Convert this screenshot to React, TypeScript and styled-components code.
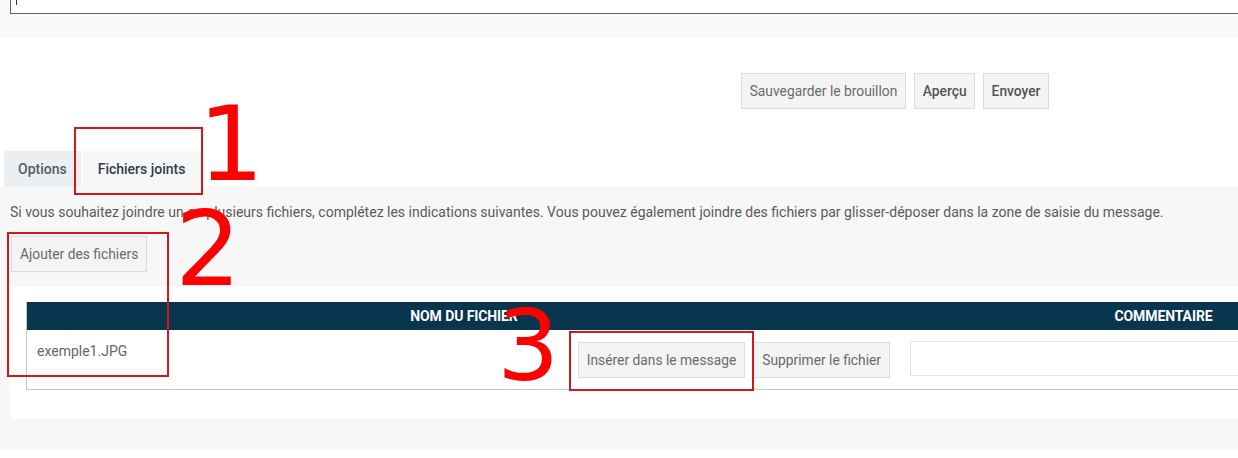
import React from "react";
import styled, { createGlobalStyle } from "styled-components";

const GlobalStyle = createGlobalStyle`
  html, body { margin: 0; padding: 0; background: #ffffff; }
  body { font-family: Roboto, "Noto Sans", Arial, sans-serif; overflow: hidden; }
  * { box-sizing: border-box; }
`;

const Page = styled.div`
  position: relative;
  width: 1238px;
  height: 458px;
  overflow: hidden;
  background: #ffffff;
`;

const TopBand = styled.div`
  height: 38px;
  background: #f8f9f9;
  padding-left: 10px;
`;

const Editor = styled.div`
  position: relative;
  height: 14px;
  background: #ffffff;
  border-left: 1px solid #5a6066;
  border-bottom: 1px solid #5a6066;
`;

const Caret = styled.span`
  position: absolute;
  left: 5px;
  top: 0;
  width: 1px;
  height: 5px;
  background: #333;
`;

const ActionsBar = styled.div`
  display: flex;
  justify-content: flex-end;
  gap: 8px;
  padding: 35px 189px 0 0;
  height: 113px;
`;

const Button = styled.button<{ $strong?: boolean }>`
  height: 36px;
  padding: 0 ${(p) => (p.$strong ? "7.5px" : "8px")};
  background: #f4f4f4;
  border: 1px solid #dcdcdc;
  border-radius: 0;
  font-family: Roboto, Arial, sans-serif;
  font-size: 13.8px;
  font-weight: ${(p) => (p.$strong ? 500 : 400)};
  color: ${(p) => (p.$strong ? "#555" : "#6a6a6a")};
  white-space: nowrap;
  cursor: pointer;
`;

const TabRow = styled.div`
  display: flex;
  padding-left: 4px;
  height: 36px;
`;

const Tab = styled.div<{ $active?: boolean }>`
  display: flex;
  align-items: center;
  height: 36px;
  padding: 0 ${(p) => (p.$active ? "16px" : "14px")};
  margin-right: ${(p) => (p.$active ? "0" : "1px")};
  background: ${(p) => (p.$active ? "#f7f7f7" : "#eceff1")};
  color: ${(p) => (p.$active ? "#2e3f4c" : "#4f5e69")};
  font-size: 14px;
  font-weight: 500;
`;

const Panel = styled.div`
  background: #f7f7f7;
  padding: 16px 0 31px 10px;
`;

const Intro = styled.p`
  margin: 0 0 15px 0;
  font-size: 14px;
  line-height: 18px;
  color: #5a5a5a;
  white-space: nowrap;
`;

const AddRow = styled.div`
  padding-left: 1px;
  margin-bottom: 15px;
`;

const WhiteBox = styled.div`
  background: #ffffff;
  padding: 15px 0 29px 16px;
`;

const Table = styled.div`
  width: 1400px;
  border-left: 1px solid #c8c8c8;
  border-bottom: 1px solid #c8c8c8;
`;

const HeaderRow = styled.div`
  display: grid;
  grid-template-columns: 874px 1fr;
  height: 28px;
  background: #08364f;
`;

const HeaderCell = styled.div`
  display: flex;
  align-items: center;
  justify-content: center;
  color: #ffffff;
  font-size: 14px;
  font-weight: 700;
  text-transform: uppercase;
  letter-spacing: -0.1px;
`;

const BodyRow = styled.div`
  display: grid;
  grid-template-columns: 874px 1fr;
  height: 59px;
`;

const FileCell = styled.div`
  display: flex;
  align-items: flex-start;
  justify-content: space-between;
  padding: 12px 11px 0 10px;
`;

const FileName = styled.span`
  font-size: 14px;
  line-height: 16px;
  color: #666;
  padding-top: 1px;
`;

const FileActions = styled.div`
  display: flex;
  gap: 8px;
`;

const CommentCell = styled.div`
  padding: 11px 0 0 9px;
`;

const CommentInput = styled.input`
  display: block;
  width: 520px;
  height: 35px;
  border: 1px solid #e4e4e4;
  background: #ffffff;
  outline: none;
`;

const Mark = styled.div<{ $x: number; $y: number; $w: number; $h: number }>`
  position: absolute;
  left: ${(p) => p.$x}px;
  top: ${(p) => p.$y}px;
  width: ${(p) => p.$w}px;
  height: ${(p) => p.$h}px;
  border: 2px solid #d2171d;
  pointer-events: none;
`;

const Num = styled.div<{ $x: number; $y: number; $size: number }>`
  position: absolute;
  left: ${(p) => p.$x}px;
  top: ${(p) => p.$y}px;
  font-family: "DejaVu Sans", sans-serif;
  font-size: ${(p) => p.$size}px;
  line-height: 1;
  color: #ff0000;
  pointer-events: none;
`;

export default function App() {
  return (
    <Page>
      <GlobalStyle />
      <TopBand>
        <Editor>
          <Caret />
        </Editor>
      </TopBand>
      <ActionsBar>
        <Button>Sauvegarder le brouillon</Button>
        <Button $strong>Aperçu</Button>
        <Button $strong>Envoyer</Button>
      </ActionsBar>
      <TabRow>
        <Tab>Options</Tab>
        <Tab $active>Fichiers joints</Tab>
      </TabRow>
      <Panel>
        <Intro>
          Si vous souhaitez joindre un ou plusieurs fichiers, complétez les indications suivantes. Vous pouvez également joindre des fichiers par glisser-déposer dans la zone de saisie du message.
        </Intro>
        <AddRow>
          <Button>Ajouter des fichiers</Button>
        </AddRow>
        <WhiteBox>
          <Table>
            <HeaderRow>
              <HeaderCell>Nom du fichier</HeaderCell>
              <HeaderCell>Commentaire</HeaderCell>
            </HeaderRow>
            <BodyRow>
              <FileCell>
                <FileName>exemple1.JPG</FileName>
                <FileActions>
                  <Button>Insérer dans le message</Button>
                  <Button>Supprimer le fichier</Button>
                </FileActions>
              </FileCell>
              <CommentCell>
                <CommentInput />
              </CommentCell>
            </BodyRow>
          </Table>
        </WhiteBox>
      </Panel>

      <Mark $x={74} $y={127} $w={129} $h={68} />
      <Mark $x={7} $y={232} $w={162} $h={145} />
      <Mark $x={569} $y={331} $w={185} $h={60} />
      <Num $x={198} $y={92} $size={104}>1</Num>
      <Num $x={175} $y={197} $size={104}>2</Num>
      <Num $x={497} $y={297} $size={98}>3</Num>
    </Page>
  );
}
